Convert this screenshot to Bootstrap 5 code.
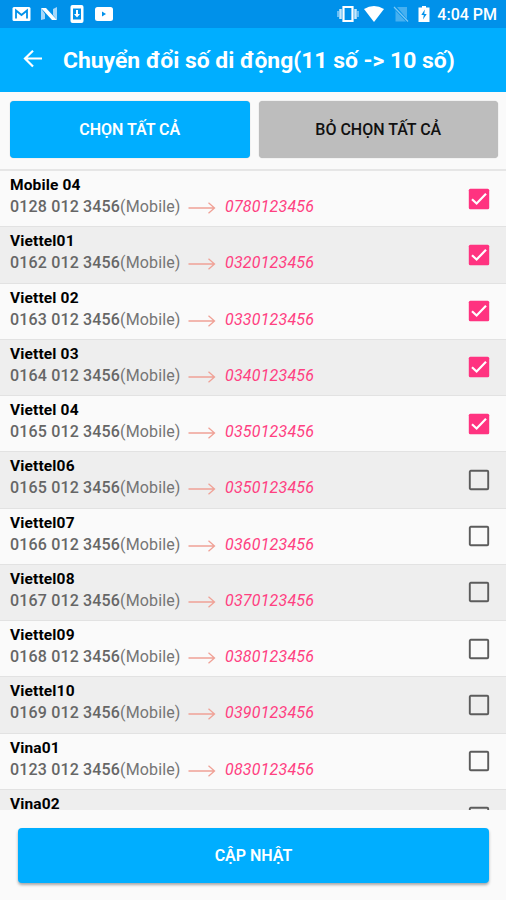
<!DOCTYPE html>
<html lang="vi">
<head>
<meta charset="utf-8">
<meta name="viewport" content="width=device-width, initial-scale=1">
<title>Chuyển đổi số di động</title>
<link rel="stylesheet" href="https://cdn.jsdelivr.net/npm/bootstrap@5.3.0/dist/css/bootstrap.min.css">
<style>
body{font-family:Roboto,"Noto Sans",sans-serif;background:#fafafa;color:#000;height:900px}
.statusbar{height:28px;background:#0091ea;padding:0 9px 0 12px}
.clock{font-size:16px;font-weight:500;line-height:28px;margin-left:6px;padding-top:1px}
.appbar{height:64px;background:#00aeff;padding:0 22px}
.title{font-size:22.9px;font-weight:700;line-height:30px;margin-left:20px;white-space:nowrap;padding-top:2px}
.actions{height:79px;padding:9px 8px 0 10px;border-bottom:2px solid #e6e6e6;column-gap:9px}
.btn-flat{height:57px;border-radius:4px;border:1px solid #0000;font-size:16px;font-weight:500;line-height:24px;color:#000;padding:0}
.btn-blue,.btn-blue:hover{background:#00aeff;color:#fff}
.btn-blue{font-weight:600}
.btn-gray,.btn-gray:hover{background:#bdbdbd;color:#111}
.btn-flat{box-shadow:0 0 1px #0005}
.contacts{height:639px}
.contact{height:56.25px;border-bottom:1px solid #e2e2e2;padding:0 16px 0 10px}
.contact:nth-child(even){background:#eee}
.person{font-size:15.5px;font-weight:700;line-height:22px;padding-top:3px;letter-spacing:.15px}
.phone{font-size:16px;line-height:22px;color:#757575;white-space:nowrap;letter-spacing:.13px}
.phone b{font-weight:500;color:#666;letter-spacing:.16px}
.old{width:178px}
.phone i{color:#ff4081;font-weight:400;letter-spacing:.2px}
.arrow{width:28px;height:12px;margin-right:9px;margin-top:6px}
.footer-bar{height:90px;padding:18px 17px 0 18px}
.footer-bar .btn-flat{height:55px;box-shadow:0 2px 3px #0005}
</style>
</head>
<body class="d-flex flex-column overflow-hidden">
<svg class="d-none">
  <symbol id="arrow" viewBox="0 0 28 12"><path d="M.5 6h26M20.500 .8L26.500 6l-6 5.200" fill="none" stroke="#f0a196" stroke-width="1.300"/></symbol>
  <symbol id="on" viewBox="0 0 22 22"><rect x=".8" y=".8" width="20.400" height="20.400" rx="1.500" fill="#ff3380"/><path d="M4 11.200l4.600 4.300L18 5.800" fill="none" stroke="#fff" stroke-width="2.200"/></symbol>
  <symbol id="off" viewBox="0 0 22 22"><rect x="1.800" y="1.800" width="18.400" height="18.400" rx="1" fill="none" stroke="#5c5c5c" stroke-width="1.900"/></symbol>
</svg>
<div class="statusbar d-flex align-items-center text-white flex-shrink-0">
  <svg width="19" height="16" viewBox="0 0 19 16"><rect x=".5" y="1" width="18" height="14" rx="1.500" fill="#fff"/><path d="M4 12.500V4.500l5.500 4.500L15 4.500v8" fill="none" stroke="#0091ea" stroke-width="1.800"/></svg>
  <svg class="ms-2" width="20" height="16" viewBox="0 0 20 16"><path d="M2 2v12l4-1V8zM18 1v13l-4-5V3z" fill="#a5d7fa"/><path d="M2 2h5l11 12h-5z" fill="#fff"/></svg>
  <svg class="ms-2 me-2" width="20" height="18" viewBox="0 0 20 18"><rect x="3.500" y="0" width="13" height="18" rx="2" fill="#fff"/><path d="M6 3.500h8v11H6z" fill="#0091ea"/><path d="M9 5h2v4h2l-3 3.500L7 9h2z" fill="#fff"/></svg>
  <svg width="18" height="14" viewBox="0 0 18 14"><rect width="18" height="14" rx="2.500" fill="#fff"/><path d="M7 4.500v5l4-2.500z" fill="#0091ea"/></svg>
  <svg class="ms-auto" width="22" height="18" viewBox="0 0 22 18"><path d="M6.500 2h9v14h-9z" fill="#0091ea" stroke="#fff" stroke-width="2.200"/><path d="M3.500 4v10M18.500 4v10" stroke="#c7e7fc" stroke-width="2.500"/><path d="M1 6v6M21 6v6" stroke="#8fcdf8" stroke-width="1.500"/></svg>
  <svg class="ms-1" width="22" height="16" viewBox="0 0 22 16"><path d="M1 3Q11-3 21 3L11 16z" fill="#fff"/></svg>
  <svg class="ms-2" width="16" height="16" viewBox="0 0 16 16"><path d="M4 1h10v12zM1 3l12 12.500H2.500V5z" fill="#46b0f0"/><path d="M1 1l14 14.500" stroke="#7cc8f5" stroke-width="1.200"/></svg>
  <svg class="ms-2" width="14" height="18" viewBox="0 0 14 18"><path d="M5 1h4v1.500h3.500V17h-11V2.500H5z" fill="#fff"/><path d="M7.800 4.500L4.300 10h2.500L6 14.500 9.700 9H7.300z" fill="#0091ea"/></svg>
  <span class="clock">4:04 PM</span>
</div>
<header class="appbar d-flex align-items-center text-white flex-shrink-0">
  <svg width="21" height="20" viewBox="0 0 21 20"><path d="M20 8.500H3M11 .8L3 8.500l8 8" fill="none" stroke="#fff" stroke-width="2.200"/></svg>
  <h1 class="title mb-0">Chuyển đổi số di động(11 số -&gt; 10 số)</h1>
</header>
<div class="actions d-flex flex-shrink-0">
  <button class="btn btn-flat btn-blue flex-fill w-50">CHỌN TẤT CẢ</button>
  <button class="btn btn-flat btn-gray flex-fill w-50">BỎ CHỌN TẤT CẢ</button>
</div>
<main class="contacts overflow-hidden flex-shrink-0">
  <div class="contact d-flex align-items-center justify-content-between"><div class="align-self-start"><div class="person">Mobile 04</div><div class="phone d-flex"><span class="old"><b>0128 012 3456</b>(Mobile)</span><svg class="arrow"><use href="#arrow"/></svg><i>0780123456</i></div></div><svg width="22" height="22"><use href="#on"/></svg></div>
  <div class="contact d-flex align-items-center justify-content-between"><div class="align-self-start"><div class="person">Viettel01</div><div class="phone d-flex"><span class="old"><b>0162 012 3456</b>(Mobile)</span><svg class="arrow"><use href="#arrow"/></svg><i>0320123456</i></div></div><svg width="22" height="22"><use href="#on"/></svg></div>
  <div class="contact d-flex align-items-center justify-content-between"><div class="align-self-start"><div class="person">Viettel 02</div><div class="phone d-flex"><span class="old"><b>0163 012 3456</b>(Mobile)</span><svg class="arrow"><use href="#arrow"/></svg><i>0330123456</i></div></div><svg width="22" height="22"><use href="#on"/></svg></div>
  <div class="contact d-flex align-items-center justify-content-between"><div class="align-self-start"><div class="person">Viettel 03</div><div class="phone d-flex"><span class="old"><b>0164 012 3456</b>(Mobile)</span><svg class="arrow"><use href="#arrow"/></svg><i>0340123456</i></div></div><svg width="22" height="22"><use href="#on"/></svg></div>
  <div class="contact d-flex align-items-center justify-content-between"><div class="align-self-start"><div class="person">Viettel 04</div><div class="phone d-flex"><span class="old"><b>0165 012 3456</b>(Mobile)</span><svg class="arrow"><use href="#arrow"/></svg><i>0350123456</i></div></div><svg width="22" height="22"><use href="#on"/></svg></div>
  <div class="contact d-flex align-items-center justify-content-between"><div class="align-self-start"><div class="person">Viettel06</div><div class="phone d-flex"><span class="old"><b>0165 012 3456</b>(Mobile)</span><svg class="arrow"><use href="#arrow"/></svg><i>0350123456</i></div></div><svg width="22" height="22"><use href="#off"/></svg></div>
  <div class="contact d-flex align-items-center justify-content-between"><div class="align-self-start"><div class="person">Viettel07</div><div class="phone d-flex"><span class="old"><b>0166 012 3456</b>(Mobile)</span><svg class="arrow"><use href="#arrow"/></svg><i>0360123456</i></div></div><svg width="22" height="22"><use href="#off"/></svg></div>
  <div class="contact d-flex align-items-center justify-content-between"><div class="align-self-start"><div class="person">Viettel08</div><div class="phone d-flex"><span class="old"><b>0167 012 3456</b>(Mobile)</span><svg class="arrow"><use href="#arrow"/></svg><i>0370123456</i></div></div><svg width="22" height="22"><use href="#off"/></svg></div>
  <div class="contact d-flex align-items-center justify-content-between"><div class="align-self-start"><div class="person">Viettel09</div><div class="phone d-flex"><span class="old"><b>0168 012 3456</b>(Mobile)</span><svg class="arrow"><use href="#arrow"/></svg><i>0380123456</i></div></div><svg width="22" height="22"><use href="#off"/></svg></div>
  <div class="contact d-flex align-items-center justify-content-between"><div class="align-self-start"><div class="person">Viettel10</div><div class="phone d-flex"><span class="old"><b>0169 012 3456</b>(Mobile)</span><svg class="arrow"><use href="#arrow"/></svg><i>0390123456</i></div></div><svg width="22" height="22"><use href="#off"/></svg></div>
  <div class="contact d-flex align-items-center justify-content-between"><div class="align-self-start"><div class="person">Vina01</div><div class="phone d-flex"><span class="old"><b>0123 012 3456</b>(Mobile)</span><svg class="arrow"><use href="#arrow"/></svg><i>0830123456</i></div></div><svg width="22" height="22"><use href="#off"/></svg></div>
  <div class="contact d-flex align-items-center justify-content-between"><div class="align-self-start"><div class="person">Vina02</div></div><svg width="22" height="22"><use href="#off"/></svg></div>
</main>
<footer class="footer-bar flex-shrink-0">
  <button class="btn btn-flat btn-blue w-100">CẬP NHẬT</button>
</footer>
<script src="https://cdn.jsdelivr.net/npm/bootstrap@5.3.0/dist/js/bootstrap.bundle.min.js"></script>
</body>
</html>
